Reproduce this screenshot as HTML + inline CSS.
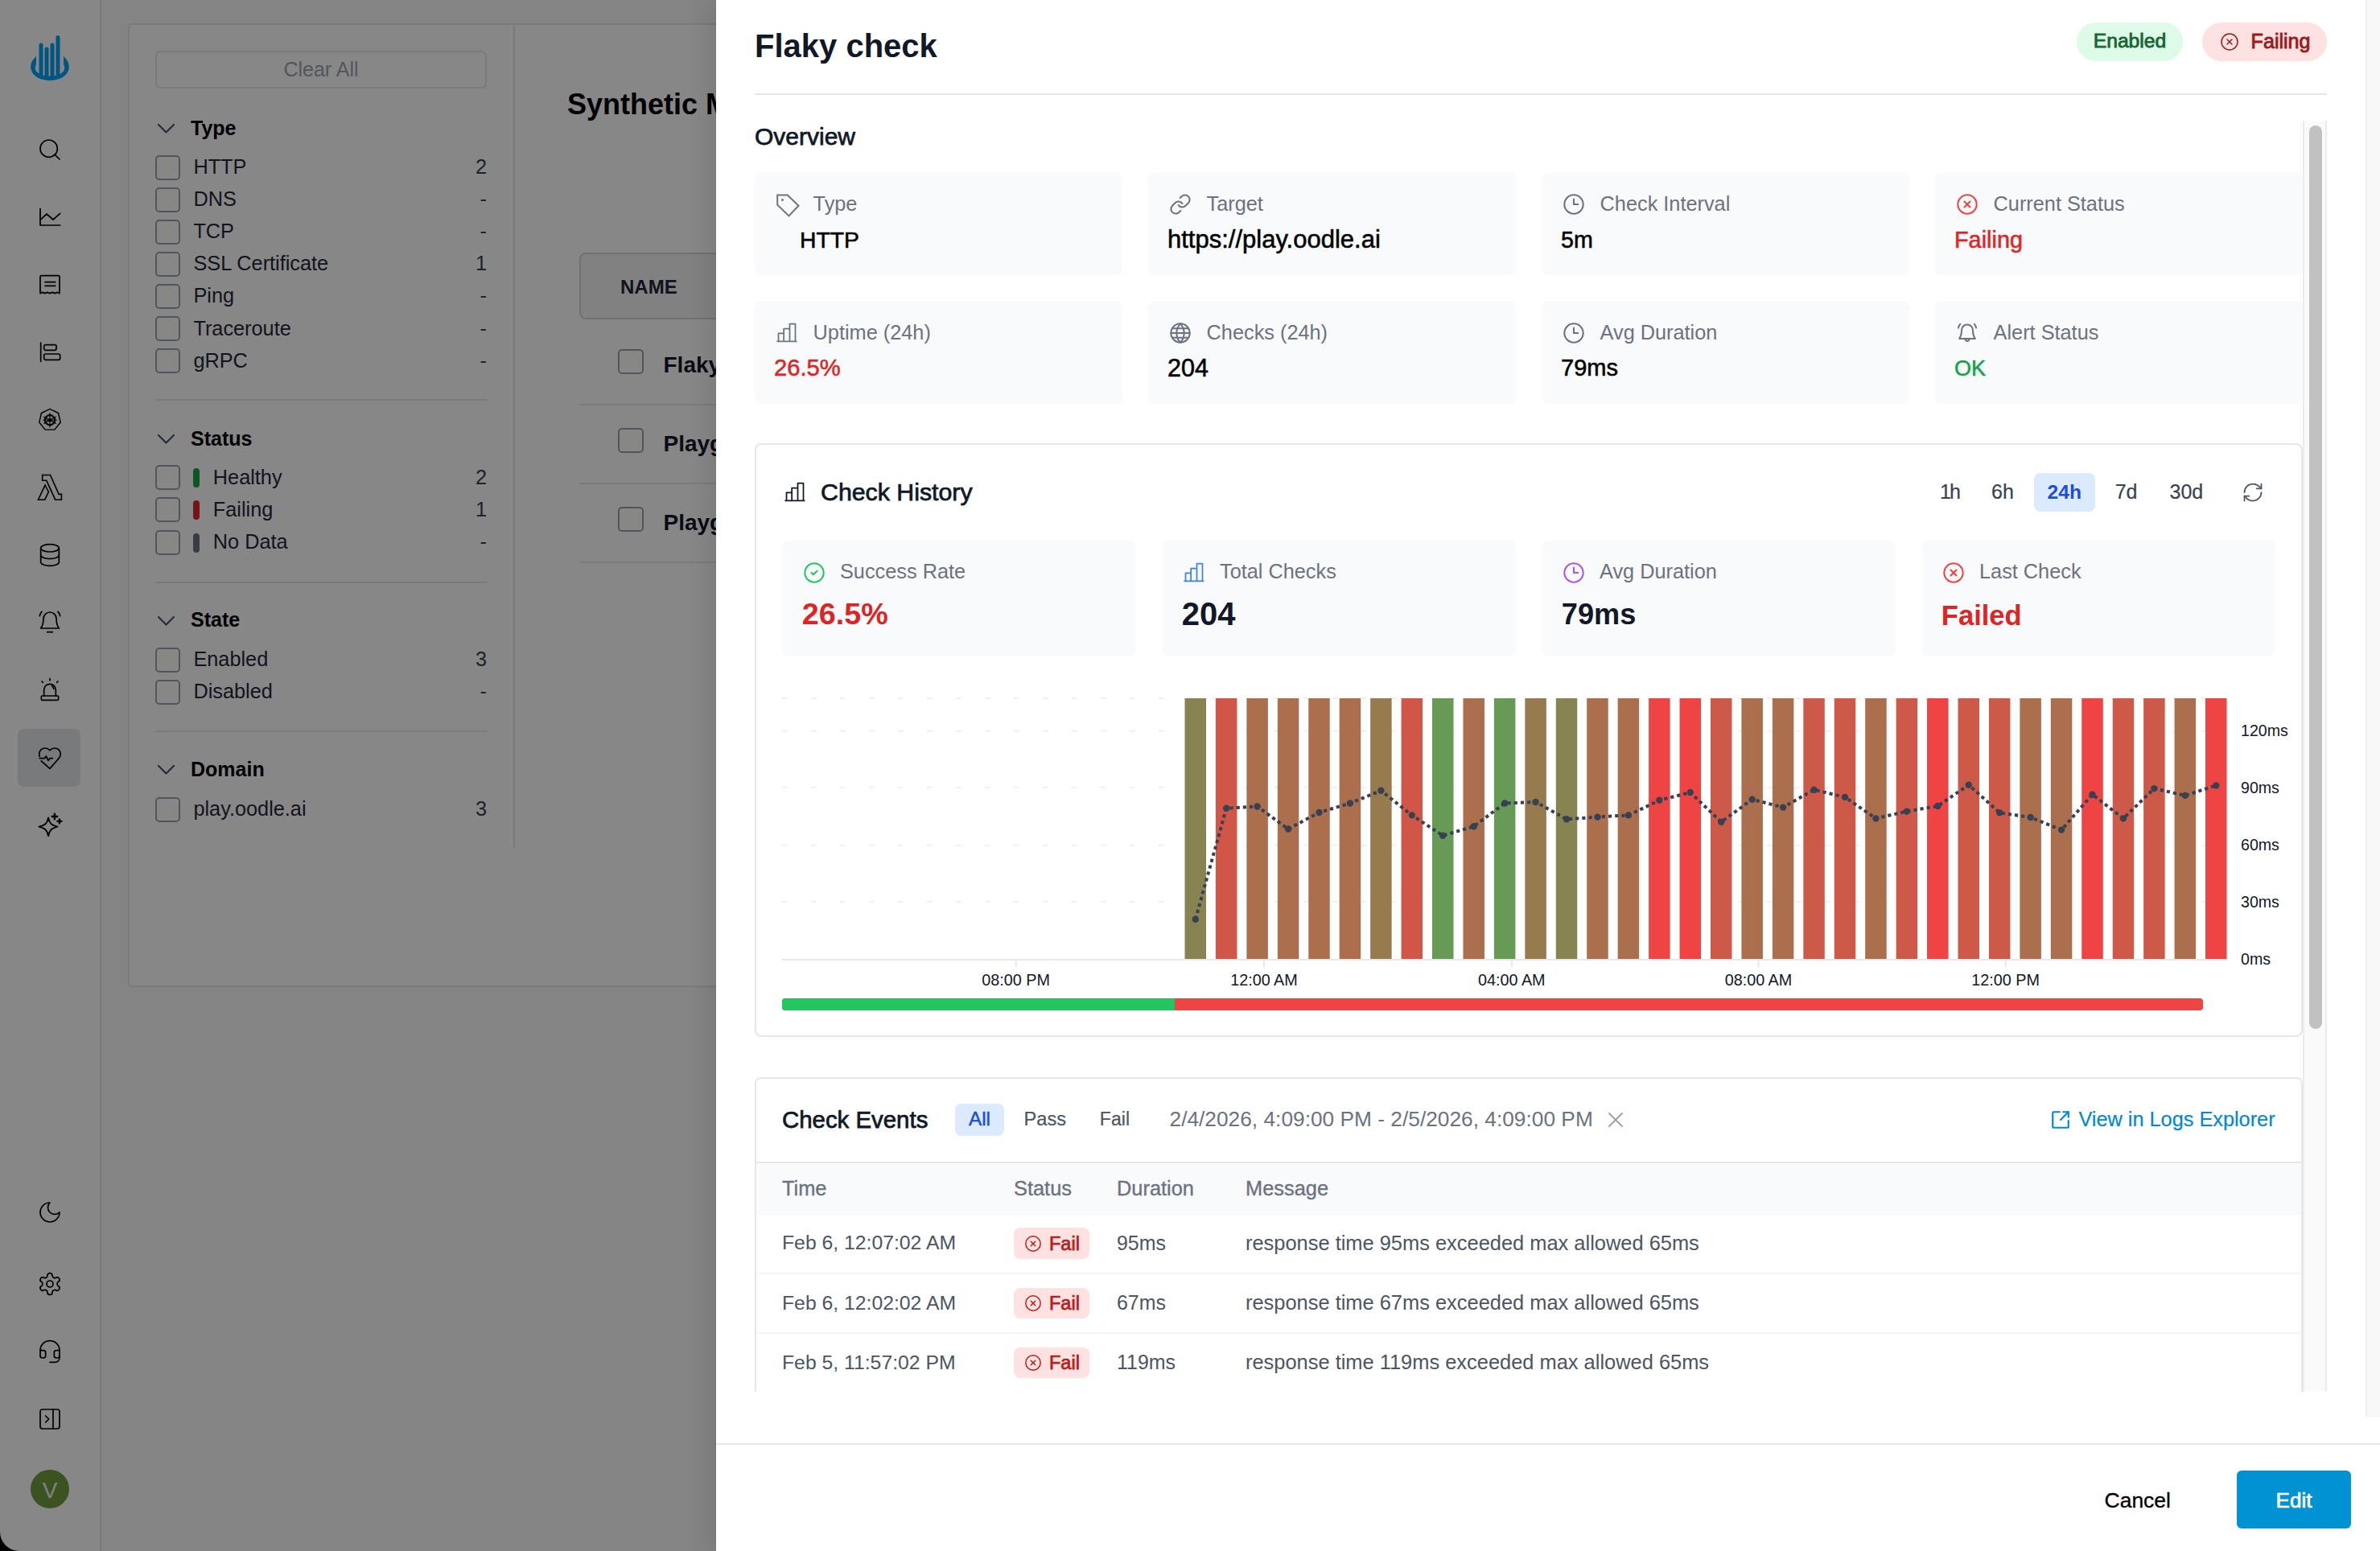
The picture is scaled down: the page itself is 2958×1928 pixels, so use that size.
<!DOCTYPE html>
<html><head><meta charset="utf-8"><title>Flaky check</title>
<style>
html,body{margin:0;padding:0;width:2958px;height:1928px;overflow:hidden;background:#f9fafb;}
body{position:relative;font-family:"Liberation Sans",sans-serif;}
.t{position:absolute;white-space:nowrap;}
.r{position:absolute;}
@media (max-width:2200px){html{zoom:0.5;}}
</style></head><body>
<div class="r" style="left:0;top:0;width:2958px;height:1928px;overflow:hidden;">
<div class="r" style="left:0px;top:0px;width:124px;height:1928px;background:#ffffff;"></div><div class="r" style="left:124px;top:0px;width:2px;height:1928px;background:#e5e7eb;"></div><svg class="r" style="left:34px;top:40px" width="56" height="64" viewBox="0 0 56 64">
      <path d="M11 30 C5 35 3.5 41 4.5 46 C6.5 55 17 60 28 60 C39 60 49.5 55 51.5 46 C52.5 41 51 35 45 30 L45 40 C47 44 46.5 47.5 43 50.5 C39 53.5 33.5 54.5 28 54.5 C22.5 54.5 17 53.5 13 50.5 C9.5 47.5 9 44 11 40 Z" fill="#00a2f2"/>
      <rect x="14.5" y="13.5" width="5" height="42" rx="2.5" fill="#00a2f2"/>
      <rect x="21.5" y="18.5" width="5" height="37" rx="2.5" fill="#00a2f2"/>
      <rect x="28.5" y="13.5" width="5" height="42" rx="2.5" fill="#00a2f2"/>
      <rect x="35.5" y="4" width="5" height="51" rx="2.5" fill="#00a2f2"/>
    </svg><div class="r" style="left:22px;top:906px;width:78px;height:72px;background:#e5e7eb;border-radius:8px;"></div><svg class="r" style="left:46px;top:170px;" width="32" height="32" viewBox="0 0 24 24" fill="none" stroke="#000" stroke-width="1.3" stroke-linecap="round" stroke-linejoin="round"><circle cx="11" cy="11" r="8"/><path d="m21 21-4.3-4.3"/></svg><svg class="r" style="left:46px;top:254px;" width="32" height="32" viewBox="0 0 24 24" fill="none" stroke="#000" stroke-width="1.3" stroke-linecap="round" stroke-linejoin="round"><path d="M3 4v15.5h18.5"/><path d="M3 14.5l6-5.5 6 5.25 6.5-5.75"/></svg><svg class="r" style="left:46px;top:338px;" width="32" height="32" viewBox="0 0 24 24" fill="none" stroke="#000" stroke-width="1.3" stroke-linecap="round" stroke-linejoin="round"><path d="M3 20V4.5a1 1 0 0 1 1-1h16a1 1 0 0 1 1 1V20l-2-1-2.25 1-2.25-1-2.5 1-2.5-1-2.25 1-2.25-1z"/><path d="M7.5 9.5h9.5M7.5 13h9.5"/></svg><svg class="r" style="left:46px;top:422px;" width="32" height="32" viewBox="0 0 24 24" fill="none" stroke="#000" stroke-width="1.3" stroke-linecap="round" stroke-linejoin="round"><path d="M3.5 3v17.5"/><rect x="6.5" y="5" width="11.5" height="5" rx="1.5"/><rect x="6.5" y="13.5" width="15" height="5.5" rx="1.5"/></svg><svg class="r" style="left:46px;top:506px" width="32" height="32" viewBox="0 0 24 24" fill="none" stroke="#000" stroke-width="1.1" stroke-linejoin="round">
              <path d="M12 1.8 19.9 5.6 21.9 14.2 16.4 21.1H7.6L2.1 14.2 4.1 5.6Z"/>
              <circle cx="12" cy="12.2" r="4.6" stroke-width="1.6"/><circle cx="12" cy="12.2" r="1.2" fill="#000"/>
              <path d="M12 5.5v13.4M6.2 9l11.6 6.4M6.2 15.4 17.8 9M5.4 12.2h13.2" stroke-width="0.9"/>
            </svg><svg class="r" style="left:40px;top:582px" width="44" height="46" viewBox="40 582 44 46" fill="none" stroke="#000" stroke-width="1.6" stroke-linejoin="miter"><path d="M52.7 590.5H62.5L73.1 614.4H76.4V621.2H68.7L57.8 597.3H52.7Z"/><path d="M56 603.1L60.4 611.4 55.7 621.2H47.5Z"/></svg><svg class="r" style="left:46px;top:674px;" width="32" height="32" viewBox="0 0 24 24" fill="none" stroke="#000" stroke-width="1.3" stroke-linecap="round" stroke-linejoin="round"><ellipse cx="12" cy="5.5" rx="8.5" ry="3.5"/><path d="M3.5 5.5v13c0 1.93 3.8 3.5 8.5 3.5s8.5-1.57 8.5-3.5v-13"/><path d="M3.5 12c0 1.93 3.8 3.5 8.5 3.5s8.5-1.57 8.5-3.5"/></svg><svg class="r" style="left:46px;top:757px;" width="32" height="32" viewBox="0 0 24 24" fill="none" stroke="#000" stroke-width="1.3" stroke-linecap="round" stroke-linejoin="round"><path d="M6 9a6 6 0 0 1 12 0c0 5 1 7 2.5 9H3.5C5 16 6 14 6 9z"/><path d="M9.5 21.5h5"/><path d="M4.5 2.5C3.3 3.8 2.7 5 2.5 6.5"/><path d="M19.5 2.5c1.2 1.3 1.8 2.5 2 4"/></svg><svg class="r" style="left:46px;top:841px;" width="32" height="32" viewBox="0 0 24 24" fill="none" stroke="#000" stroke-width="1.3" stroke-linecap="round" stroke-linejoin="round"><path d="M6.5 18v-5.5a5.5 5.5 0 0 1 11 0V18"/><rect x="4" y="18" width="16" height="4" rx="1"/><path d="M14 9a2.5 2.5 0 0 1 1.5 2.5"/><path d="M12 2v1.5"/><path d="M4.5 4.5l1 1"/><path d="M19.5 4.5l-1 1"/></svg><svg class="r" style="left:46px;top:926px;" width="32" height="32" viewBox="0 0 24 24" fill="none" stroke="#000" stroke-width="1.3" stroke-linecap="round" stroke-linejoin="round"><path d="M19.5 13.5c1.5-1.5 2.5-3 2.5-5A5.5 5.5 0 0 0 16.5 3c-1.8 0-3 .5-4.5 2-1.5-1.5-2.7-2-4.5-2A5.5 5.5 0 0 0 2 8.5c0 .8.1 1.5.4 2.2"/><path d="M4 15l8 7 7.5-8.5"/><path d="M2.5 12.5H7l1.5-2 2 4 1.5-2h2.5"/></svg><svg class="r" style="left:40px;top:1004px" width="44" height="42" viewBox="40 1004 44 42" fill="none" stroke="#000" stroke-width="2" stroke-linejoin="round" stroke-linecap="round"><path d="M60.1 1016.6C61.6 1023.4 63.5 1025.5 71.5 1027.6 63.5 1029.8 61.6 1032.2 60.1 1039 58.6 1032.2 56.7 1029.8 48.6 1027.6 56.7 1025.5 58.6 1023.4 60.1 1016.6Z"/><path d="M67.9 1011.8V1018.2M64.7 1015H71.1" stroke-width="2.4"/><path d="M73.9 1018.5V1023.3M71.5 1020.9H76.3" stroke-width="2.4"/></svg><svg class="r" style="left:46px;top:1491px;" width="32" height="32" viewBox="0 0 24 24" fill="none" stroke="#000" stroke-width="1.3" stroke-linecap="round" stroke-linejoin="round"><path d="M12 3a6 6 0 0 0 9 9 9 9 0 1 1-9-9Z"/></svg><svg class="r" style="left:46px;top:1580px;" width="32" height="32" viewBox="0 0 24 24" fill="none" stroke="#000" stroke-width="1.3" stroke-linecap="round" stroke-linejoin="round"><path d="M12.22 2h-.44a2 2 0 0 0-2 2v.18a2 2 0 0 1-1 1.73l-.43.25a2 2 0 0 1-2 0l-.15-.08a2 2 0 0 0-2.73.73l-.22.38a2 2 0 0 0 .73 2.73l.15.1a2 2 0 0 1 1 1.72v.51a2 2 0 0 1-1 1.74l-.15.09a2 2 0 0 0-.73 2.73l.22.38a2 2 0 0 0 2.73.73l.15-.08a2 2 0 0 1 2 0l.43.25a2 2 0 0 1 1 1.73V20a2 2 0 0 0 2 2h.44a2 2 0 0 0 2-2v-.18a2 2 0 0 1 1-1.73l.43-.25a2 2 0 0 1 2 0l.15.08a2 2 0 0 0 2.73-.73l.22-.39a2 2 0 0 0-.73-2.73l-.15-.08a2 2 0 0 1-1-1.74v-.5a2 2 0 0 1 1-1.74l.15-.09a2 2 0 0 0 .73-2.73l-.22-.38a2 2 0 0 0-2.73-.73l-.15.08a2 2 0 0 1-2 0l-.43-.25a2 2 0 0 1-1-1.73V4a2 2 0 0 0-2-2z"/><circle cx="12" cy="12" r="3"/></svg><svg class="r" style="left:46px;top:1664px;" width="32" height="32" viewBox="0 0 24 24" fill="none" stroke="#000" stroke-width="1.3" stroke-linecap="round" stroke-linejoin="round"><path d="M3 11h3a2 2 0 0 1 2 2v3a2 2 0 0 1-2 2H5a2 2 0 0 1-2-2v-5Zm0 0a9 9 0 1 1 18 0m0 0v5a2 2 0 0 1-2 2h-1a2 2 0 0 1-2-2v-3a2 2 0 0 1 2-2h3Z"/><path d="M21 16v2a4 4 0 0 1-4 4h-5"/></svg><svg class="r" style="left:46px;top:1748px;" width="32" height="32" viewBox="0 0 24 24" fill="none" stroke="#000" stroke-width="1.3" stroke-linecap="round" stroke-linejoin="round"><rect width="18" height="18" x="3" y="3" rx="2"/><path d="M15 3v18"/><path d="m8 9 3 3-3 3"/></svg><div class="r" style="left:38px;top:1827px;width:48px;height:48px;background:#6e9e3e;border-radius:50%;"></div><div class="t" style="left:-938.00px;width:2000px;text-align:center;top:1839.30px;font-size:28px;line-height:28px;color:#f3f4f6;font-weight:400;">V</div>
<div class="r" style="left:159px;top:29px;width:2900px;height:1198px;background:#ffffff;border:2px solid #e5e7eb;border-radius:4px;box-sizing:border-box;"></div><div class="r" style="left:638px;top:32px;width:2px;height:1022px;background:#e5e7eb;"></div><div class="r" style="left:193px;top:63px;width:412px;height:47px;background:#ffffff;border:2px solid #e5e7eb;border-radius:6px;box-sizing:border-box;"></div><div class="t" style="left:-601.00px;width:2000px;text-align:center;top:73.84px;font-size:25px;line-height:25px;color:#9ca3af;font-weight:400;">Clear All</div><svg class="r" style="left:190px;top:150.2px" width="30" height="20"><polyline points="7,5 16.5,14.5 26,5" fill="none" stroke="#4b5563" stroke-width="2.2" stroke-linecap="round" stroke-linejoin="round"/></svg><div class="t" style="left:237.00px;top:147.04px;font-size:25px;line-height:25px;color:#000000;font-weight:700;">Type</div><div class="r" style="left:193px;top:192.5px;width:31px;height:31px;background:#ffffff;border:2px solid #9ca3af;border-radius:5px;box-sizing:border-box;"></div><div class="t" style="left:240.40px;top:195.08px;font-size:25.3px;line-height:25.3px;color:#1f2937;font-weight:400;">HTTP</div><div class="t" style="right:2353.00px;top:195.08px;font-size:25.3px;line-height:25.3px;color:#374151;font-weight:400;">2</div><div class="r" style="left:193px;top:232.6px;width:31px;height:31px;background:#ffffff;border:2px solid #9ca3af;border-radius:5px;box-sizing:border-box;"></div><div class="t" style="left:240.40px;top:235.18px;font-size:25.3px;line-height:25.3px;color:#1f2937;font-weight:400;">DNS</div><div class="t" style="right:2353.00px;top:235.18px;font-size:25.3px;line-height:25.3px;color:#374151;font-weight:400;">-</div><div class="r" style="left:193px;top:272.7px;width:31px;height:31px;background:#ffffff;border:2px solid #9ca3af;border-radius:5px;box-sizing:border-box;"></div><div class="t" style="left:240.40px;top:275.28px;font-size:25.3px;line-height:25.3px;color:#1f2937;font-weight:400;">TCP</div><div class="t" style="right:2353.00px;top:275.28px;font-size:25.3px;line-height:25.3px;color:#374151;font-weight:400;">-</div><div class="r" style="left:193px;top:312.8px;width:31px;height:31px;background:#ffffff;border:2px solid #9ca3af;border-radius:5px;box-sizing:border-box;"></div><div class="t" style="left:240.40px;top:315.38px;font-size:25.3px;line-height:25.3px;color:#1f2937;font-weight:400;">SSL Certificate</div><div class="t" style="right:2353.00px;top:315.38px;font-size:25.3px;line-height:25.3px;color:#374151;font-weight:400;">1</div><div class="r" style="left:193px;top:352.9px;width:31px;height:31px;background:#ffffff;border:2px solid #9ca3af;border-radius:5px;box-sizing:border-box;"></div><div class="t" style="left:240.40px;top:355.48px;font-size:25.3px;line-height:25.3px;color:#1f2937;font-weight:400;">Ping</div><div class="t" style="right:2353.00px;top:355.48px;font-size:25.3px;line-height:25.3px;color:#374151;font-weight:400;">-</div><div class="r" style="left:193px;top:393.0px;width:31px;height:31px;background:#ffffff;border:2px solid #9ca3af;border-radius:5px;box-sizing:border-box;"></div><div class="t" style="left:240.40px;top:395.58px;font-size:25.3px;line-height:25.3px;color:#1f2937;font-weight:400;">Traceroute</div><div class="t" style="right:2353.00px;top:395.58px;font-size:25.3px;line-height:25.3px;color:#374151;font-weight:400;">-</div><div class="r" style="left:193px;top:433.1px;width:31px;height:31px;background:#ffffff;border:2px solid #9ca3af;border-radius:5px;box-sizing:border-box;"></div><div class="t" style="left:240.40px;top:435.68px;font-size:25.3px;line-height:25.3px;color:#1f2937;font-weight:400;">gRPC</div><div class="t" style="right:2353.00px;top:435.68px;font-size:25.3px;line-height:25.3px;color:#374151;font-weight:400;">-</div><div class="r" style="left:193px;top:495.5px;width:412px;height:2px;background:#e5e7eb;"></div><svg class="r" style="left:190px;top:536px" width="30" height="20"><polyline points="7,5 16.5,14.5 26,5" fill="none" stroke="#4b5563" stroke-width="2.2" stroke-linecap="round" stroke-linejoin="round"/></svg><div class="t" style="left:237.00px;top:532.84px;font-size:25px;line-height:25px;color:#000000;font-weight:700;">Status</div><div class="r" style="left:193px;top:578.3px;width:31px;height:31px;background:#ffffff;border:2px solid #9ca3af;border-radius:5px;box-sizing:border-box;"></div><div class="r" style="left:240px;top:582.3px;width:8px;height:24px;background:#16a34a;border-radius:4px;"></div><div class="t" style="left:264.80px;top:580.88px;font-size:25.3px;line-height:25.3px;color:#1f2937;font-weight:400;">Healthy</div><div class="t" style="right:2353.00px;top:580.88px;font-size:25.3px;line-height:25.3px;color:#374151;font-weight:400;">2</div><div class="r" style="left:193px;top:618.4px;width:31px;height:31px;background:#ffffff;border:2px solid #9ca3af;border-radius:5px;box-sizing:border-box;"></div><div class="r" style="left:240px;top:622.4px;width:8px;height:24px;background:#dc2626;border-radius:4px;"></div><div class="t" style="left:264.80px;top:620.98px;font-size:25.3px;line-height:25.3px;color:#1f2937;font-weight:400;">Failing</div><div class="t" style="right:2353.00px;top:620.98px;font-size:25.3px;line-height:25.3px;color:#374151;font-weight:400;">1</div><div class="r" style="left:193px;top:658.5px;width:31px;height:31px;background:#ffffff;border:2px solid #9ca3af;border-radius:5px;box-sizing:border-box;"></div><div class="r" style="left:240px;top:662.5px;width:8px;height:24px;background:#6b7280;border-radius:4px;"></div><div class="t" style="left:264.80px;top:661.08px;font-size:25.3px;line-height:25.3px;color:#1f2937;font-weight:400;">No Data</div><div class="t" style="right:2353.00px;top:661.08px;font-size:25.3px;line-height:25.3px;color:#374151;font-weight:400;">-</div><div class="r" style="left:193px;top:722.5px;width:412px;height:2px;background:#e5e7eb;"></div><svg class="r" style="left:190px;top:761.5px" width="30" height="20"><polyline points="7,5 16.5,14.5 26,5" fill="none" stroke="#4b5563" stroke-width="2.2" stroke-linecap="round" stroke-linejoin="round"/></svg><div class="t" style="left:237.00px;top:758.34px;font-size:25px;line-height:25px;color:#000000;font-weight:700;">State</div><div class="r" style="left:193px;top:804.6px;width:31px;height:31px;background:#ffffff;border:2px solid #9ca3af;border-radius:5px;box-sizing:border-box;"></div><div class="t" style="left:240.40px;top:807.18px;font-size:25.3px;line-height:25.3px;color:#1f2937;font-weight:400;">Enabled</div><div class="t" style="right:2353.00px;top:807.18px;font-size:25.3px;line-height:25.3px;color:#374151;font-weight:400;">3</div><div class="r" style="left:193px;top:844.7px;width:31px;height:31px;background:#ffffff;border:2px solid #9ca3af;border-radius:5px;box-sizing:border-box;"></div><div class="t" style="left:240.40px;top:847.28px;font-size:25.3px;line-height:25.3px;color:#1f2937;font-weight:400;">Disabled</div><div class="t" style="right:2353.00px;top:847.28px;font-size:25.3px;line-height:25.3px;color:#374151;font-weight:400;">-</div><div class="r" style="left:193px;top:908px;width:412px;height:2px;background:#e5e7eb;"></div><svg class="r" style="left:190px;top:947px" width="30" height="20"><polyline points="7,5 16.5,14.5 26,5" fill="none" stroke="#4b5563" stroke-width="2.2" stroke-linecap="round" stroke-linejoin="round"/></svg><div class="t" style="left:237.00px;top:943.84px;font-size:25px;line-height:25px;color:#000000;font-weight:700;">Domain</div><div class="r" style="left:193px;top:990.8px;width:31px;height:31px;background:#ffffff;border:2px solid #9ca3af;border-radius:5px;box-sizing:border-box;"></div><div class="t" style="left:240.40px;top:993.38px;font-size:25.3px;line-height:25.3px;color:#1f2937;font-weight:400;">play.oodle.ai</div><div class="t" style="right:2353.00px;top:993.38px;font-size:25.3px;line-height:25.3px;color:#374151;font-weight:400;">3</div>
<div class="t" style="left:705.00px;top:112.23px;font-size:36px;line-height:36px;color:#000000;font-weight:700;">Synthetic Monitoring</div><div class="r" style="left:720px;top:314px;width:2200px;height:83px;background:#f3f4f6;border:2px solid #d1d5db;border-radius:8px;box-sizing:border-box;"></div><div class="t" style="left:771.00px;top:344.68px;font-size:24px;line-height:24px;color:#1f2937;font-weight:700;">NAME</div><div class="r" style="left:768px;top:433.7px;width:32px;height:31px;background:#ffffff;border:2px solid #9ca3af;border-radius:5px;box-sizing:border-box;"></div><div class="t" style="left:824.50px;top:440.00px;font-size:28px;line-height:28px;color:#111827;font-weight:700;">Flaky check</div><div class="r" style="left:720px;top:502px;width:2200px;height:2px;background:#e5e7eb;"></div><div class="r" style="left:768px;top:532px;width:32px;height:31px;background:#ffffff;border:2px solid #9ca3af;border-radius:5px;box-sizing:border-box;"></div><div class="t" style="left:824.50px;top:538.30px;font-size:28px;line-height:28px;color:#111827;font-weight:700;">Playground HTTP</div><div class="r" style="left:720px;top:600px;width:2200px;height:2px;background:#e5e7eb;"></div><div class="r" style="left:768px;top:629.7px;width:32px;height:31px;background:#ffffff;border:2px solid #9ca3af;border-radius:5px;box-sizing:border-box;"></div><div class="t" style="left:824.50px;top:636.00px;font-size:28px;line-height:28px;color:#111827;font-weight:700;">Playground SSL</div><div class="r" style="left:720px;top:698px;width:2200px;height:2px;background:#e5e7eb;"></div>
</div>
<div class="r" style="left:0;top:0;width:2958px;height:1928px;background:rgba(0,0,0,0.47);"></div>
<div class="r" style="left:890px;top:0px;width:2068px;height:1928px;background:#ffffff;box-shadow:-8px 0 28px rgba(0,0,0,0.10);"></div><div class="t" style="left:938.00px;top:36.74px;font-size:40px;line-height:40px;color:#111827;font-weight:700;">Flaky check</div><div class="r" style="left:2581px;top:28px;width:132px;height:48px;background:#dcfce7;border-radius:24px;"></div><div class="t" style="left:1647.00px;width:2000px;text-align:center;top:39.09px;font-size:24.7px;line-height:24.7px;color:#166534;font-weight:400;-webkit-text-stroke:0.85px #166534;">Enabled</div><div class="r" style="left:2737px;top:28px;width:155px;height:48px;background:#fee2e2;border-radius:24px;"></div><svg class="r" style="left:2759px;top:40px;" width="24" height="24" viewBox="0 0 24 24" fill="none" stroke="#991b1b" stroke-width="1.5" stroke-linecap="round" stroke-linejoin="round"><circle cx="12" cy="12" r="10"/><path d="m15 9-6 6"/><path d="m9 9 6 6"/></svg><div class="t" style="left:2797.60px;top:38.75px;font-size:25.1px;line-height:25.1px;color:#991b1b;font-weight:400;-webkit-text-stroke:0.85px #991b1b;">Failing</div><div class="r" style="left:938px;top:116px;width:1954px;height:2px;background:#e5e7eb;"></div><div class="r" style="left:0;top:150px;width:2862px;height:1580px;overflow:hidden;"><div class="r" style="left:0;top:-150px;width:2958px;height:1928px;"><div class="t" style="left:938.00px;top:154.60px;font-size:30px;line-height:30px;color:#111827;font-weight:400;-webkit-text-stroke:0.75px #111827;">Overview</div><div class="r" style="left:938px;top:214px;width:457px;height:128px;background:#f9fafb;border-radius:8px;"></div><svg class="r" style="left:960px;top:236px" width="40" height="40" viewBox="960 236 40 40" fill="none"><path d="M966.2 242.6H978.8L992.5 255.8 980.4 268.4 966.2 254.7Z" stroke="#6b7280" stroke-width="2" stroke-linejoin="miter"/><circle cx="972.5" cy="248.4" r="1.5" fill="#6b7280"/></svg><div class="t" style="left:1010.60px;top:240.58px;font-size:25.3px;line-height:25.3px;color:#6b7280;font-weight:400;">Type</div><div class="t" style="left:994.00px;top:284.04px;font-size:28.3px;line-height:28.3px;color:#000000;font-weight:400;-webkit-text-stroke:0.55px #000000;">HTTP</div><div class="r" style="left:1427px;top:214px;width:457px;height:128px;background:#f9fafb;border-radius:8px;"></div><svg class="r" style="left:1453px;top:240px;" width="28" height="28" viewBox="0 0 24 24" fill="none" stroke="#6b7280" stroke-width="1.75" stroke-linecap="round" stroke-linejoin="round"><path d="M10 13a5 5 0 0 0 7.54.54l3-3a5 5 0 0 0-7.07-7.07l-1.72 1.71"/><path d="M14 11a5 5 0 0 0-7.54-.54l-3 3a5 5 0 0 0 7.07 7.07l1.71-1.71"/></svg><div class="t" style="left:1499.60px;top:240.58px;font-size:25.3px;line-height:25.3px;color:#6b7280;font-weight:400;">Target</div><div class="t" style="left:1451.00px;top:281.76px;font-size:31px;line-height:31px;color:#000000;font-weight:400;-webkit-text-stroke:0.55px #000000;">https://play.oodle.ai</div><div class="r" style="left:1916px;top:214px;width:457px;height:128px;background:#f9fafb;border-radius:8px;"></div><svg class="r" style="left:1942px;top:240px;" width="28" height="28" viewBox="0 0 24 24" fill="none" stroke="#6b7280" stroke-width="1.75" stroke-linecap="round" stroke-linejoin="round"><circle cx="12" cy="12" r="10"/><path d="M12 6.5V12h4.5"/></svg><div class="t" style="left:1988.60px;top:240.58px;font-size:25.3px;line-height:25.3px;color:#6b7280;font-weight:400;">Check Interval</div><div class="t" style="left:1940.00px;top:283.79px;font-size:28.6px;line-height:28.6px;color:#000000;font-weight:400;-webkit-text-stroke:0.55px #000000;">5m</div><div class="r" style="left:2405px;top:214px;width:457px;height:128px;background:#f9fafb;border-radius:8px;"></div><svg class="r" style="left:2431px;top:240px;" width="28" height="28" viewBox="0 0 24 24" fill="none" stroke="#ef4444" stroke-width="1.75" stroke-linecap="round" stroke-linejoin="round"><circle cx="12" cy="12" r="10"/><path d="m15 9-6 6"/><path d="m9 9 6 6"/></svg><div class="t" style="left:2477.60px;top:240.58px;font-size:25.3px;line-height:25.3px;color:#6b7280;font-weight:400;">Current Status</div><div class="t" style="left:2429.00px;top:283.58px;font-size:28.85px;line-height:28.85px;color:#dc2626;font-weight:400;-webkit-text-stroke:0.55px #dc2626;">Failing</div><div class="r" style="left:938px;top:374px;width:457px;height:128px;background:#f9fafb;border-radius:8px;"></div><svg class="r" style="left:964px;top:400px;" width="28" height="28" viewBox="0 0 24 24" fill="none" stroke="#6b7280" stroke-width="1.75" stroke-linecap="round" stroke-linejoin="round"><path d="M1.2 20.8H22.6M3 20.8V12.4H8.7V20.8M8.7 20.8V7.3H15V20.8M15 20.8V2.2H21V20.8" stroke-linecap="butt" stroke-linejoin="round" stroke-width="1.5"/></svg><div class="t" style="left:1010.60px;top:400.58px;font-size:25.3px;line-height:25.3px;color:#6b7280;font-weight:400;">Uptime (24h)</div><div class="t" style="left:962.00px;top:443.28px;font-size:29.2px;line-height:29.2px;color:#dc2626;font-weight:400;-webkit-text-stroke:0.55px #dc2626;">26.5%</div><div class="r" style="left:1427px;top:374px;width:457px;height:128px;background:#f9fafb;border-radius:8px;"></div><svg class="r" style="left:1453px;top:400px;" width="28" height="28" viewBox="0 0 24 24" fill="none" stroke="#6b7280" stroke-width="1.75" stroke-linecap="round" stroke-linejoin="round"><circle cx="12" cy="12" r="10"/><path d="M12 2a14.5 14.5 0 0 0 0 20 14.5 14.5 0 0 0 0-20"/><path d="M2 12h20"/><path d="M3.5 7h17M3.5 17h17"/></svg><div class="t" style="left:1499.60px;top:400.58px;font-size:25.3px;line-height:25.3px;color:#6b7280;font-weight:400;">Checks (24h)</div><div class="t" style="left:1451.00px;top:442.18px;font-size:30.5px;line-height:30.5px;color:#000000;font-weight:400;-webkit-text-stroke:0.55px #000000;">204</div><div class="r" style="left:1916px;top:374px;width:457px;height:128px;background:#f9fafb;border-radius:8px;"></div><svg class="r" style="left:1942px;top:400px;" width="28" height="28" viewBox="0 0 24 24" fill="none" stroke="#6b7280" stroke-width="1.75" stroke-linecap="round" stroke-linejoin="round"><circle cx="12" cy="12" r="10"/><path d="M12 6.5V12h4.5"/></svg><div class="t" style="left:1988.60px;top:400.58px;font-size:25.3px;line-height:25.3px;color:#6b7280;font-weight:400;">Avg Duration</div><div class="t" style="left:1940.00px;top:443.45px;font-size:29px;line-height:29px;color:#000000;font-weight:400;-webkit-text-stroke:0.55px #000000;">79ms</div><div class="r" style="left:2405px;top:374px;width:457px;height:128px;background:#f9fafb;border-radius:8px;"></div><svg class="r" style="left:2431px;top:400px;" width="28" height="28" viewBox="0 0 24 24" fill="none" stroke="#6b7280" stroke-width="1.75" stroke-linecap="round" stroke-linejoin="round"><path d="M6 9a6 6 0 0 1 12 0c0 5 1 7 2.5 9H3.5C5 16 6 14 6 9z"/><path d="M10 18.5a2 2 0 0 0 4 0"/><path d="M4.5 2.5C3.3 3.8 2.7 5 2.5 6.5"/><path d="M19.5 2.5c1.2 1.3 1.8 2.5 2 4"/></svg><div class="t" style="left:2477.60px;top:400.58px;font-size:25.3px;line-height:25.3px;color:#6b7280;font-weight:400;">Alert Status</div><div class="t" style="left:2429.00px;top:445.14px;font-size:27px;line-height:27px;color:#16a34a;font-weight:400;-webkit-text-stroke:0.55px #16a34a;">OK</div><div class="r" style="left:938px;top:551px;width:1924px;height:738px;background:#ffffff;border:2px solid #e5e7eb;border-radius:8px;box-sizing:border-box;"></div><svg class="r" style="left:974px;top:597.5px;" width="28" height="28" viewBox="0 0 24 24" fill="none" stroke="#111827" stroke-width="2" stroke-linecap="round" stroke-linejoin="round"><path d="M1.2 20.8H22.6M3 20.8V12.4H8.7V20.8M8.7 20.8V7.3H15V20.8M15 20.8V2.2H21V20.8" stroke-linecap="butt" stroke-linejoin="round" stroke-width="1.5"/></svg><div class="t" style="left:1020.00px;top:597.15px;font-size:30.3px;line-height:30.3px;color:#111827;font-weight:400;-webkit-text-stroke:0.75px #111827;">Check History</div><div class="r" style="left:2528px;top:588px;width:76px;height:48px;background:#dbeafe;border-radius:8px;"></div><div class="t" style="left:2411.00px;top:599.24px;font-size:25px;line-height:25px;color:#374151;font-weight:400;-webkit-text-stroke:0.2px #374151;letter-spacing:-2px;">1h</div><div class="t" style="left:2475.00px;top:599.24px;font-size:25px;line-height:25px;color:#374151;font-weight:400;-webkit-text-stroke:0.2px #374151;">6h</div><div class="t" style="left:2544.60px;top:599.58px;font-size:24.6px;line-height:24.6px;color:#1d4ed8;font-weight:700;">24h</div><div class="t" style="left:2628.70px;top:599.24px;font-size:25px;line-height:25px;color:#374151;font-weight:400;-webkit-text-stroke:0.2px #374151;">7d</div><div class="t" style="left:2696.50px;top:599.24px;font-size:25px;line-height:25px;color:#374151;font-weight:400;-webkit-text-stroke:0.2px #374151;">30d</div><svg class="r" style="left:2786px;top:598px;" width="28" height="28" viewBox="0 0 24 24" fill="none" stroke="#4b5563" stroke-width="1.5" stroke-linecap="round" stroke-linejoin="round"><path d="M3 12a9 9 0 0 1 9-9 9.75 9.75 0 0 1 6.74 2.74L21 8"/><path d="M21 3v5h-5"/><path d="M21 12a9 9 0 0 1-9 9 9.75 9.75 0 0 1-6.74-2.74L3 16"/><path d="M8 16H3v5"/></svg><div class="r" style="left:972px;top:672px;width:440px;height:144px;background:#f9fafb;border-radius:8px;"></div><svg class="r" style="left:998px;top:698px;" width="28" height="28" viewBox="0 0 24 24" fill="none" stroke="#22c55e" stroke-width="1.75" stroke-linecap="round" stroke-linejoin="round"><circle cx="12" cy="12" r="10"/><path d="m9 12 2 2 4-4"/></svg><div class="t" style="left:1044.00px;top:698.18px;font-size:25.3px;line-height:25.3px;color:#6b7280;font-weight:400;">Success Rate</div><div class="t" style="left:996.80px;top:745.09px;font-size:37.7px;line-height:37.7px;color:#dc2626;font-weight:700;">26.5%</div><div class="r" style="left:1444px;top:672px;width:440px;height:144px;background:#f9fafb;border-radius:8px;"></div><svg class="r" style="left:1470px;top:698px;" width="28" height="28" viewBox="0 0 24 24" fill="none" stroke="#3b82f6" stroke-width="1.75" stroke-linecap="round" stroke-linejoin="round"><path d="M1.2 20.8H22.6M3 20.8V12.4H8.7V20.8M8.7 20.8V7.3H15V20.8M15 20.8V2.2H21V20.8" stroke-linecap="butt" stroke-linejoin="round" stroke-width="1.5"/></svg><div class="t" style="left:1516.00px;top:698.18px;font-size:25.3px;line-height:25.3px;color:#6b7280;font-weight:400;">Total Checks</div><div class="t" style="left:1468.80px;top:743.14px;font-size:40px;line-height:40px;color:#111827;font-weight:700;">204</div><div class="r" style="left:1916px;top:672px;width:440px;height:144px;background:#f9fafb;border-radius:8px;"></div><svg class="r" style="left:1942px;top:698px;" width="28" height="28" viewBox="0 0 24 24" fill="none" stroke="#a855f7" stroke-width="1.75" stroke-linecap="round" stroke-linejoin="round"><circle cx="12" cy="12" r="10"/><path d="M12 6.5V12h4.5"/></svg><div class="t" style="left:1988.00px;top:698.18px;font-size:25.3px;line-height:25.3px;color:#6b7280;font-weight:400;">Avg Duration</div><div class="t" style="left:1940.80px;top:746.36px;font-size:36.2px;line-height:36.2px;color:#111827;font-weight:700;">79ms</div><div class="r" style="left:2388px;top:672px;width:440px;height:144px;background:#f9fafb;border-radius:8px;"></div><svg class="r" style="left:2414px;top:698px;" width="28" height="28" viewBox="0 0 24 24" fill="none" stroke="#ef4444" stroke-width="1.75" stroke-linecap="round" stroke-linejoin="round"><circle cx="12" cy="12" r="10"/><path d="m15 9-6 6"/><path d="m9 9 6 6"/></svg><div class="t" style="left:2460.00px;top:698.18px;font-size:25.3px;line-height:25.3px;color:#6b7280;font-weight:400;">Last Check</div><div class="t" style="left:2412.80px;top:747.71px;font-size:34.6px;line-height:34.6px;color:#dc2626;font-weight:700;">Failed</div><svg class="r" style="left:0px;top:0px" width="2958" height="1928"><line x1="972" y1="868" x2="2768" y2="868" stroke="#eef0f2" stroke-width="2" stroke-dasharray="7 29"/><line x1="972" y1="908.7" x2="2768" y2="908.7" stroke="#eef0f2" stroke-width="2" stroke-dasharray="7 29"/><line x1="972" y1="978.8" x2="2768" y2="978.8" stroke="#eef0f2" stroke-width="2" stroke-dasharray="7 29"/><line x1="972" y1="1050.7" x2="2768" y2="1050.7" stroke="#eef0f2" stroke-width="2" stroke-dasharray="7 29"/><line x1="972" y1="1120.8" x2="2768" y2="1120.8" stroke="#eef0f2" stroke-width="2" stroke-dasharray="7 29"/><rect x="1472.50" y="868" width="26.5" height="324.5" fill="#888451"/><rect x="1510.94" y="868" width="26.5" height="324.5" fill="#d25648"/><rect x="1549.38" y="868" width="26.5" height="324.5" fill="#ab6f4d"/><rect x="1587.82" y="868" width="26.5" height="324.5" fill="#ab6f4d"/><rect x="1626.26" y="868" width="26.5" height="324.5" fill="#ab6f4d"/><rect x="1664.70" y="868" width="26.5" height="324.5" fill="#ab6f4d"/><rect x="1703.14" y="868" width="26.5" height="324.5" fill="#977b4f"/><rect x="1741.58" y="868" width="26.5" height="324.5" fill="#d25648"/><rect x="1780.02" y="868" width="26.5" height="324.5" fill="#669a55"/><rect x="1818.46" y="868" width="26.5" height="324.5" fill="#ab6f4d"/><rect x="1856.90" y="868" width="26.5" height="324.5" fill="#669a55"/><rect x="1895.34" y="868" width="26.5" height="324.5" fill="#977b4f"/><rect x="1933.78" y="868" width="26.5" height="324.5" fill="#888451"/><rect x="1972.22" y="868" width="26.5" height="324.5" fill="#ab6f4d"/><rect x="2010.66" y="868" width="26.5" height="324.5" fill="#ab6f4d"/><rect x="2049.10" y="868" width="26.5" height="324.5" fill="#ef4444"/><rect x="2087.54" y="868" width="26.5" height="324.5" fill="#ef4444"/><rect x="2125.98" y="868" width="26.5" height="324.5" fill="#cd5a48"/><rect x="2164.42" y="868" width="26.5" height="324.5" fill="#ab6f4d"/><rect x="2202.86" y="868" width="26.5" height="324.5" fill="#ab6f4d"/><rect x="2241.30" y="868" width="26.5" height="324.5" fill="#cd5a48"/><rect x="2279.74" y="868" width="26.5" height="324.5" fill="#cd5a48"/><rect x="2318.18" y="868" width="26.5" height="324.5" fill="#ab6f4d"/><rect x="2356.62" y="868" width="26.5" height="324.5" fill="#cd5a48"/><rect x="2395.06" y="868" width="26.5" height="324.5" fill="#ef4444"/><rect x="2433.50" y="868" width="26.5" height="324.5" fill="#cd5a48"/><rect x="2471.94" y="868" width="26.5" height="324.5" fill="#cd5a48"/><rect x="2510.38" y="868" width="26.5" height="324.5" fill="#ab6f4d"/><rect x="2548.82" y="868" width="26.5" height="324.5" fill="#ab6f4d"/><rect x="2587.26" y="868" width="26.5" height="324.5" fill="#ef4444"/><rect x="2625.70" y="868" width="26.5" height="324.5" fill="#cd5a48"/><rect x="2664.14" y="868" width="26.5" height="324.5" fill="#cd5a48"/><rect x="2702.58" y="868" width="26.5" height="324.5" fill="#ab6f4d"/><rect x="2741.02" y="868" width="26.5" height="324.5" fill="#ef4444"/><line x1="972" y1="1193" x2="2768" y2="1193" stroke="#e5e7eb" stroke-width="2"/><line x1="1262.7" y1="1193" x2="1262.7" y2="1202" stroke="#e5e7eb" stroke-width="2"/><line x1="1571" y1="1193" x2="1571" y2="1202" stroke="#e5e7eb" stroke-width="2"/><line x1="1878.8" y1="1193" x2="1878.8" y2="1202" stroke="#e5e7eb" stroke-width="2"/><line x1="2185.5" y1="1193" x2="2185.5" y2="1202" stroke="#e5e7eb" stroke-width="2"/><line x1="2492.7" y1="1193" x2="2492.7" y2="1202" stroke="#e5e7eb" stroke-width="2"/><polyline points="1485.75,1142.8 1524.19,1004.7 1562.63,1002.5 1601.07,1030.5 1639.51,1010 1677.95,998.5 1716.39,982.8 1754.83,1013.4 1793.27,1038.7 1831.71,1027.3 1870.15,998.5 1908.59,997 1947.03,1018.3 1985.47,1015.6 2023.91,1013.4 2062.35,994.8 2100.79,985 2139.23,1021.8 2177.67,993.7 2216.11,1003.6 2254.55,981.7 2292.99,990.9 2331.43,1017.4 2369.87,1008.6 2408.31,1002 2446.75,975.7 2485.19,1010.2 2523.63,1016 2562.07,1031.6 2600.51,987.6 2638.95,1017.4 2677.39,980.1 2715.83,988.9 2754.27,976.4" fill="none" stroke="#374151" stroke-width="4" stroke-dasharray="4.2 4"/><circle cx="1485.75" cy="1142.8" r="4.2" fill="#374151"/><circle cx="1524.19" cy="1004.7" r="4.2" fill="#374151"/><circle cx="1562.63" cy="1002.5" r="4.2" fill="#374151"/><circle cx="1601.07" cy="1030.5" r="4.2" fill="#374151"/><circle cx="1639.51" cy="1010" r="4.2" fill="#374151"/><circle cx="1677.95" cy="998.5" r="4.2" fill="#374151"/><circle cx="1716.39" cy="982.8" r="4.2" fill="#374151"/><circle cx="1754.83" cy="1013.4" r="4.2" fill="#374151"/><circle cx="1793.27" cy="1038.7" r="4.2" fill="#374151"/><circle cx="1831.71" cy="1027.3" r="4.2" fill="#374151"/><circle cx="1870.15" cy="998.5" r="4.2" fill="#374151"/><circle cx="1908.59" cy="997" r="4.2" fill="#374151"/><circle cx="1947.03" cy="1018.3" r="4.2" fill="#374151"/><circle cx="1985.47" cy="1015.6" r="4.2" fill="#374151"/><circle cx="2023.91" cy="1013.4" r="4.2" fill="#374151"/><circle cx="2062.35" cy="994.8" r="4.2" fill="#374151"/><circle cx="2100.79" cy="985" r="4.2" fill="#374151"/><circle cx="2139.23" cy="1021.8" r="4.2" fill="#374151"/><circle cx="2177.67" cy="993.7" r="4.2" fill="#374151"/><circle cx="2216.11" cy="1003.6" r="4.2" fill="#374151"/><circle cx="2254.55" cy="981.7" r="4.2" fill="#374151"/><circle cx="2292.99" cy="990.9" r="4.2" fill="#374151"/><circle cx="2331.43" cy="1017.4" r="4.2" fill="#374151"/><circle cx="2369.87" cy="1008.6" r="4.2" fill="#374151"/><circle cx="2408.31" cy="1002" r="4.2" fill="#374151"/><circle cx="2446.75" cy="975.7" r="4.2" fill="#374151"/><circle cx="2485.19" cy="1010.2" r="4.2" fill="#374151"/><circle cx="2523.63" cy="1016" r="4.2" fill="#374151"/><circle cx="2562.07" cy="1031.6" r="4.2" fill="#374151"/><circle cx="2600.51" cy="987.6" r="4.2" fill="#374151"/><circle cx="2638.95" cy="1017.4" r="4.2" fill="#374151"/><circle cx="2677.39" cy="980.1" r="4.2" fill="#374151"/><circle cx="2715.83" cy="988.9" r="4.2" fill="#374151"/><circle cx="2754.27" cy="976.4" r="4.2" fill="#374151"/></svg><div class="t" style="left:262.70px;width:2000px;text-align:center;top:1208.84px;font-size:19.8px;line-height:19.8px;color:#111827;font-weight:400;">08:00 PM</div><div class="t" style="left:571.00px;width:2000px;text-align:center;top:1208.84px;font-size:19.8px;line-height:19.8px;color:#111827;font-weight:400;">12:00 AM</div><div class="t" style="left:878.80px;width:2000px;text-align:center;top:1208.84px;font-size:19.8px;line-height:19.8px;color:#111827;font-weight:400;">04:00 AM</div><div class="t" style="left:1185.50px;width:2000px;text-align:center;top:1208.84px;font-size:19.8px;line-height:19.8px;color:#111827;font-weight:400;">08:00 AM</div><div class="t" style="left:1492.70px;width:2000px;text-align:center;top:1208.84px;font-size:19.8px;line-height:19.8px;color:#111827;font-weight:400;">12:00 PM</div><div class="t" style="left:2785.00px;top:899.01px;font-size:19.6px;line-height:19.6px;color:#111827;font-weight:400;">120ms</div><div class="t" style="left:2785.00px;top:970.01px;font-size:19.6px;line-height:19.6px;color:#111827;font-weight:400;">90ms</div><div class="t" style="left:2785.00px;top:1041.01px;font-size:19.6px;line-height:19.6px;color:#111827;font-weight:400;">60ms</div><div class="t" style="left:2785.00px;top:1112.01px;font-size:19.6px;line-height:19.6px;color:#111827;font-weight:400;">30ms</div><div class="t" style="left:2785.00px;top:1183.01px;font-size:19.6px;line-height:19.6px;color:#111827;font-weight:400;">0ms</div><div class="r" style="left:972px;top:1240.5px;width:1766px;height:15.5px;background:#ef4444;border-radius:4px;"></div><div class="r" style="left:972px;top:1240.5px;width:488px;height:15.5px;background:#22c55e;border-radius:4px 0 0 4px;"></div><div class="r" style="left:938px;top:1339px;width:1924px;height:600px;background:#ffffff;border:2px solid #e5e7eb;border-radius:8px;box-sizing:border-box;"></div><div class="t" style="left:972.00px;top:1376.91px;font-size:29.4px;line-height:29.4px;color:#111827;font-weight:400;-webkit-text-stroke:0.75px #111827;">Check Events</div><div class="r" style="left:1187.4px;top:1372.4px;width:60.2px;height:39.4px;background:#dbeafe;border-radius:8px;"></div><div class="t" style="left:217.50px;width:2000px;text-align:center;top:1379.43px;font-size:24.3px;line-height:24.3px;color:#1d4ed8;font-weight:400;-webkit-text-stroke:0.5px #1d4ed8;">All</div><div class="t" style="left:1272.60px;top:1380.02px;font-size:23.6px;line-height:23.6px;color:#4b5563;font-weight:400;-webkit-text-stroke:0.2px #4b5563;">Pass</div><div class="t" style="left:1366.80px;top:1380.45px;font-size:23.1px;line-height:23.1px;color:#4b5563;font-weight:400;-webkit-text-stroke:0.2px #4b5563;">Fail</div><div class="t" style="left:1453.50px;top:1378.34px;font-size:26.3px;line-height:26.3px;color:#6b7280;font-weight:400;">2/4/2026, 4:09:00 PM - 2/5/2026, 4:09:00 PM</div><svg class="r" style="left:1992px;top:1376px;" width="32" height="32" viewBox="0 0 24 24" fill="none" stroke="#9ca3af" stroke-width="1.5" stroke-linecap="round" stroke-linejoin="round"><path d="M18 6 6 18"/><path d="m6 6 12 12"/></svg><svg class="r" style="left:2548px;top:1379px;" width="26" height="26" viewBox="0 0 24 24" fill="none" stroke="#0288d1" stroke-width="2" stroke-linecap="round" stroke-linejoin="round"><path d="M21 13v7a1 1 0 0 1-1 1H4a1 1 0 0 1-1-1V4a1 1 0 0 1 1-1h7"/><path d="m21 3-9 9"/><path d="M15 3h6v6"/></svg><div class="t" style="left:2583.40px;top:1378.58px;font-size:25.3px;line-height:25.3px;color:#0288d1;font-weight:400;-webkit-text-stroke:0.2px #0288d1;">View in Logs Explorer</div><div class="r" style="left:940px;top:1444px;width:1920px;height:2px;background:#e5e7eb;"></div><div class="r" style="left:940px;top:1446px;width:1920px;height:64px;background:#f9fafb;"></div><div class="t" style="left:972.00px;top:1464.50px;font-size:25.4px;line-height:25.4px;color:#6b7280;font-weight:400;-webkit-text-stroke:0.35px #6b7280;">Time</div><div class="t" style="left:1260.00px;top:1464.50px;font-size:25.4px;line-height:25.4px;color:#6b7280;font-weight:400;-webkit-text-stroke:0.35px #6b7280;">Status</div><div class="t" style="left:1388.00px;top:1464.50px;font-size:25.4px;line-height:25.4px;color:#6b7280;font-weight:400;-webkit-text-stroke:0.35px #6b7280;">Duration</div><div class="t" style="left:1548.00px;top:1464.50px;font-size:25.4px;line-height:25.4px;color:#6b7280;font-weight:400;-webkit-text-stroke:0.35px #6b7280;">Message</div><div class="t" style="left:972.00px;top:1533.45px;font-size:24.75px;line-height:24.75px;color:#4b5563;font-weight:400;">Feb 6, 12:07:02 AM</div><div class="r" style="left:1260px;top:1526.4px;width:94.4px;height:38.5px;background:#fee2e2;border-radius:8px;"></div><svg class="r" style="left:1273px;top:1535.0px;" width="22" height="22" viewBox="0 0 24 24" fill="none" stroke="#b91c1c" stroke-width="1.6" stroke-linecap="round" stroke-linejoin="round"><circle cx="12" cy="12" r="10"/><path d="m15 9-6 6"/><path d="m9 9 6 6"/></svg><div class="t" style="left:1304.00px;top:1534.51px;font-size:23.5px;line-height:23.5px;color:#b91c1c;font-weight:400;-webkit-text-stroke:0.75px #b91c1c;">Fail</div><div class="t" style="left:1388.00px;top:1533.28px;font-size:24.95px;line-height:24.95px;color:#4b5563;font-weight:400;">95ms</div><div class="t" style="left:1548.00px;top:1532.87px;font-size:25.43px;line-height:25.43px;color:#4b5563;font-weight:400;">response time 95ms exceeded max allowed 65ms</div><div class="r" style="left:940px;top:1582.1px;width:1920px;height:2px;background:#f3f4f6;"></div><div class="t" style="left:972.00px;top:1607.55px;font-size:24.75px;line-height:24.75px;color:#4b5563;font-weight:400;">Feb 6, 12:02:02 AM</div><div class="r" style="left:1260px;top:1600.5px;width:94.4px;height:38.5px;background:#fee2e2;border-radius:8px;"></div><svg class="r" style="left:1273px;top:1609.1px;" width="22" height="22" viewBox="0 0 24 24" fill="none" stroke="#b91c1c" stroke-width="1.6" stroke-linecap="round" stroke-linejoin="round"><circle cx="12" cy="12" r="10"/><path d="m15 9-6 6"/><path d="m9 9 6 6"/></svg><div class="t" style="left:1304.00px;top:1608.61px;font-size:23.5px;line-height:23.5px;color:#b91c1c;font-weight:400;-webkit-text-stroke:0.75px #b91c1c;">Fail</div><div class="t" style="left:1388.00px;top:1607.38px;font-size:24.95px;line-height:24.95px;color:#4b5563;font-weight:400;">67ms</div><div class="t" style="left:1548.00px;top:1606.97px;font-size:25.43px;line-height:25.43px;color:#4b5563;font-weight:400;">response time 67ms exceeded max allowed 65ms</div><div class="r" style="left:940px;top:1656.2px;width:1920px;height:2px;background:#f3f4f6;"></div><div class="t" style="left:972.00px;top:1681.65px;font-size:24.75px;line-height:24.75px;color:#4b5563;font-weight:400;">Feb 5, 11:57:02 PM</div><div class="r" style="left:1260px;top:1674.6000000000001px;width:94.4px;height:38.5px;background:#fee2e2;border-radius:8px;"></div><svg class="r" style="left:1273px;top:1683.2px;" width="22" height="22" viewBox="0 0 24 24" fill="none" stroke="#b91c1c" stroke-width="1.6" stroke-linecap="round" stroke-linejoin="round"><circle cx="12" cy="12" r="10"/><path d="m15 9-6 6"/><path d="m9 9 6 6"/></svg><div class="t" style="left:1304.00px;top:1682.71px;font-size:23.5px;line-height:23.5px;color:#b91c1c;font-weight:400;-webkit-text-stroke:0.75px #b91c1c;">Fail</div><div class="t" style="left:1388.00px;top:1681.48px;font-size:24.95px;line-height:24.95px;color:#4b5563;font-weight:400;">119ms</div><div class="t" style="left:1548.00px;top:1681.07px;font-size:25.43px;line-height:25.43px;color:#4b5563;font-weight:400;">response time 119ms exceeded max allowed 65ms</div></div></div><div class="r" style="left:2862px;top:150px;width:30px;height:1580px;background:#fafafa;border-left:2px solid #ececec;border-right:2px solid #ececec;box-sizing:border-box;"></div><div class="r" style="left:2870px;top:156px;width:16px;height:1123px;background:#c1c1c1;border-radius:8px;"></div><div class="r" style="left:2940px;top:0px;width:18px;height:1761px;background:#f8f8f8;border-left:2px solid #ececec;box-sizing:border-box;"></div><div class="r" style="left:890px;top:1794px;width:2068px;height:2px;background:#e5e7eb;"></div><div class="t" style="left:2615.50px;top:1851.57px;font-size:26.5px;line-height:26.5px;color:#000000;font-weight:400;-webkit-text-stroke:0.3px #000000;">Cancel</div><div class="r" style="left:2780px;top:1828px;width:142px;height:72px;background:#0092d2;border-radius:6px;"></div><div class="t" style="left:1851.00px;width:2000px;text-align:center;top:1851.99px;font-size:26px;line-height:26px;color:#ffffff;font-weight:400;-webkit-text-stroke:0.7px #ffffff;">Edit</div>
<div class="r" style="left:0;top:1904px;width:24px;height:24px;background:#000;"></div><div class="r" style="left:0;top:1880px;width:48px;height:48px;background:#878787;border-bottom-left-radius:24px;"></div>
</body></html>
